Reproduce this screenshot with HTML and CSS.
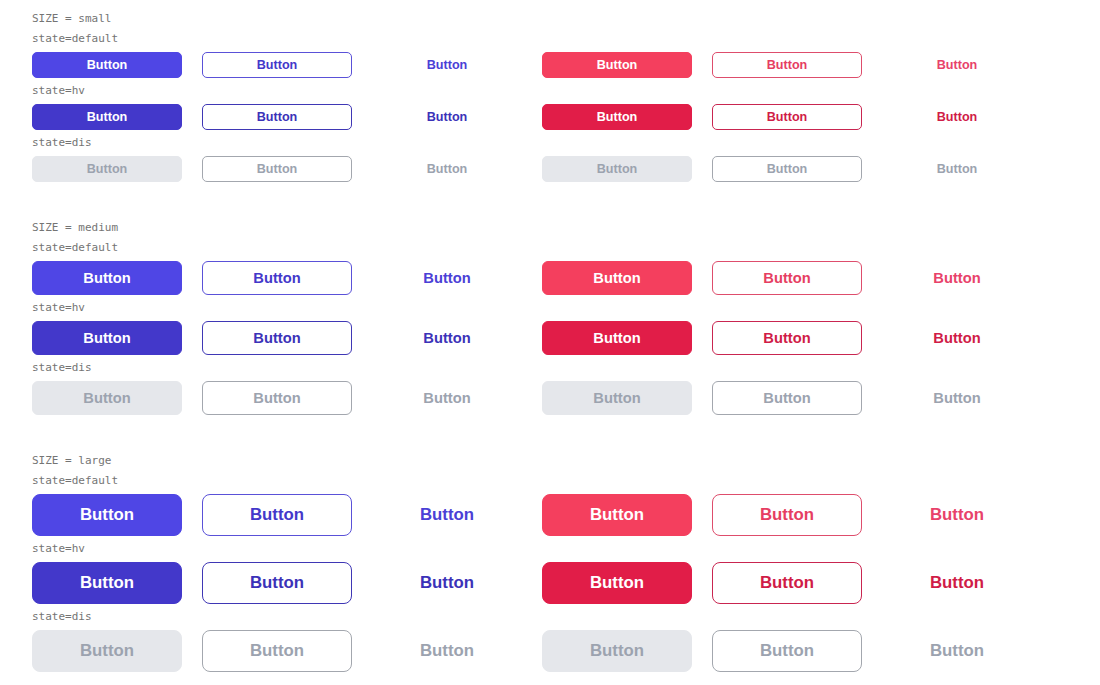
FILE: index.html
```html
<!DOCTYPE html>
<html lang="en">
<head>
  <meta charset="UTF-8">
  <meta name="viewport" content="width=device-width, initial-scale=1.0">
  <title>Buttons</title>
  <link rel="stylesheet" href="styles.css">
</head>
<body>

  <section class="size size-sm">
    <p class="label">SIZE = small</p>
    <p class="label state">state=default</p>
    <div class="row">
      <button class="btn primary">Button</button>
      <button class="btn outline">Button</button>
      <button class="btn ghost">Button</button>
      <button class="btn danger">Button</button>
      <button class="btn outline-danger">Button</button>
      <button class="btn ghost-danger">Button</button>
    </div>
    <p class="label state">state=hv</p>
    <div class="row hv">
      <button class="btn primary">Button</button>
      <button class="btn outline">Button</button>
      <button class="btn ghost">Button</button>
      <button class="btn danger">Button</button>
      <button class="btn outline-danger">Button</button>
      <button class="btn ghost-danger">Button</button>
    </div>
    <p class="label state">state=dis</p>
    <div class="row">
      <button class="btn primary" disabled>Button</button>
      <button class="btn outline" disabled>Button</button>
      <button class="btn ghost" disabled>Button</button>
      <button class="btn danger" disabled>Button</button>
      <button class="btn outline-danger" disabled>Button</button>
      <button class="btn ghost-danger" disabled>Button</button>
    </div>
  </section>

  <section class="size size-md">
    <p class="label">SIZE = medium</p>
    <p class="label state">state=default</p>
    <div class="row">
      <button class="btn primary">Button</button>
      <button class="btn outline">Button</button>
      <button class="btn ghost">Button</button>
      <button class="btn danger">Button</button>
      <button class="btn outline-danger">Button</button>
      <button class="btn ghost-danger">Button</button>
    </div>
    <p class="label state">state=hv</p>
    <div class="row hv">
      <button class="btn primary">Button</button>
      <button class="btn outline">Button</button>
      <button class="btn ghost">Button</button>
      <button class="btn danger">Button</button>
      <button class="btn outline-danger">Button</button>
      <button class="btn ghost-danger">Button</button>
    </div>
    <p class="label state">state=dis</p>
    <div class="row">
      <button class="btn primary" disabled>Button</button>
      <button class="btn outline" disabled>Button</button>
      <button class="btn ghost" disabled>Button</button>
      <button class="btn danger" disabled>Button</button>
      <button class="btn outline-danger" disabled>Button</button>
      <button class="btn ghost-danger" disabled>Button</button>
    </div>
  </section>

  <section class="size size-lg">
    <p class="label">SIZE = large</p>
    <p class="label state">state=default</p>
    <div class="row">
      <button class="btn primary">Button</button>
      <button class="btn outline">Button</button>
      <button class="btn ghost">Button</button>
      <button class="btn danger">Button</button>
      <button class="btn outline-danger">Button</button>
      <button class="btn ghost-danger">Button</button>
    </div>
    <p class="label state">state=hv</p>
    <div class="row hv">
      <button class="btn primary">Button</button>
      <button class="btn outline">Button</button>
      <button class="btn ghost">Button</button>
      <button class="btn danger">Button</button>
      <button class="btn outline-danger">Button</button>
      <button class="btn ghost-danger">Button</button>
    </div>
    <p class="label state">state=dis</p>
    <div class="row">
      <button class="btn primary" disabled>Button</button>
      <button class="btn outline" disabled>Button</button>
      <button class="btn ghost" disabled>Button</button>
      <button class="btn danger" disabled>Button</button>
      <button class="btn outline-danger" disabled>Button</button>
      <button class="btn ghost-danger" disabled>Button</button>
    </div>
  </section>

</body>
</html>
```

FILE: styles.css
```css
body{
  margin: 0;
  padding: 8px 32px;
  background-color: white;
  font-family: 'Liberation Sans', Arial, sans-serif;
}

.size{
  margin-bottom: 35px;
}

.label{
  margin: 0;
  padding-top: 1px;
  font-family: 'DejaVu Sans Mono', monospace;
  font-size: 11px;
  line-height: 19px;
  color: #747474;
}
.state{
  margin-bottom: 4px;
}

.row{
  display: flex;
  gap: 20px;
  margin-bottom: 2px;
}

.btn{
  width: 150px;
  height: 26px;
  padding: 0;
  border: 1px solid transparent;
  border-radius: 5px;
  background-color: transparent;
  font-family: 'Liberation Sans', Arial, sans-serif;
  font-weight: bold;
  font-size: 12.6px;
  cursor: pointer;
}

.size-md .btn{
  height: 34px;
  border-radius: 6px;
  font-size: 14.7px;
}
.size-lg .btn{
  height: 42px;
  border-radius: 8px;
  font-size: 16.8px;
}

/* indigo */
.primary{
  background-color: #4f46e5;
  border-color: #4f46e5;
  color: white;
}
.outline{
  background-color: white;
  border-color: #5a51d8;
  color: #4338ca;
}
.ghost{
  color: #4a40d6;
}
.hv .primary{
  background-color: #4338ca;
  border-color: #4338ca;
}
.hv .outline{
  border-color: #3f37b5;
  color: #3b32b8;
}
.hv .ghost{
  color: #3b32b8;
}

/* rose */
.danger{
  background-color: #f43f5e;
  border-color: #f43f5e;
  color: white;
}
.outline-danger{
  background-color: white;
  border-color: #de4d6c;
  color: #e63e62;
}
.ghost-danger{
  color: #e8426a;
}
.hv .danger{
  background-color: #e11d48;
  border-color: #e11d48;
}
.hv .outline-danger{
  border-color: #c92550;
  color: #d01c47;
}
.hv .ghost-danger{
  color: #d01c47;
}

/* disabled */
.btn:disabled{
  color: #9ca3af;
  cursor: default;
}
.primary:disabled, .danger:disabled{
  background-color: #e5e7eb;
  border-color: #e5e7eb;
}
.outline:disabled, .outline-danger:disabled{
  border-color: #a3a7ae;
}
```
